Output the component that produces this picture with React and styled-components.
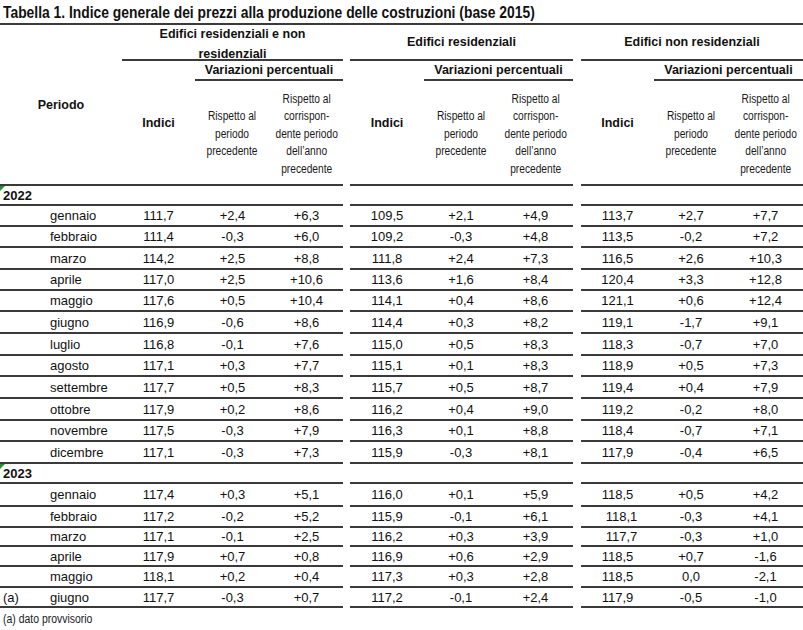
import React from 'react';
import styled, { createGlobalStyle } from 'styled-components';

const GlobalStyle = createGlobalStyle`
  html, body { margin: 0; padding: 0; background: #fff; }
  body { font-family: "Liberation Sans", Arial, sans-serif; color: #111; }
`;

const LINE = '2px solid #3a3a3a';
const COLS = '122px 73px 75px 73px 7px 74px 74px 75px 8px 73px 74px 75px';

const Page = styled.div`
  width: 803px;
`;

/* Arial Narrow is not installed: emulate the condensed face */
const Narrow = styled.span`
  display: inline-block;
  transform: scaleX(${(p) => p.$k || 0.83});
  transform-origin: ${(p) => p.$origin || 'center'};
  white-space: nowrap;
`;

const Title = styled.h1`
  margin: 0;
  height: 25px;
  box-sizing: border-box;
  padding: 2px 0 0 3px;
  border-bottom: ${LINE};
  font-weight: 700;
  font-size: 17px;
  line-height: 21px;
  white-space: nowrap;
  color: #111;
`;

const Head = styled.div`
  display: grid;
  grid-template-columns: ${COLS};
  grid-template-rows: 36px 20px 105px;
`;

const HeadCell = styled.div`
  box-sizing: border-box;
  display: flex;
  align-items: center;
  justify-content: center;
  text-align: center;
  padding-top: ${(p) => p.$pt || 0}px;
  border-bottom: ${LINE};
  font-weight: 700;
  font-size: 12.5px;
  line-height: 20px;
  white-space: nowrap;
  grid-row: span ${(p) => p.$rows || 1};
  grid-column: span ${(p) => p.$cols || 1};
`;

const SubHead = styled.div`
  box-sizing: border-box;
  display: flex;
  align-items: center;
  justify-content: center;
  text-align: center;
  padding-top: 4px;
  border-bottom: ${LINE};
  font-size: 12px;
  line-height: 17.5px;
  white-space: nowrap;
  color: #1a1a1a;
`;

const Gap = styled.div`
  grid-row: span ${(p) => p.$rows || 1};
`;

const Row = styled.div`
  display: grid;
  grid-template-columns: ${COLS};
  height: ${(p) => p.$h}px;
`;

const PeriodCell = styled.div`
  position: relative;
  box-sizing: border-box;
  display: flex;
  align-items: center;
  padding-left: 3px;
  border-bottom: ${LINE};
  font-size: 13px;
  font-weight: ${(p) => (p.$year ? 700 : 400)};
  white-space: nowrap;
`;

const Note = styled.span`
  width: 47px;
  flex: none;
`;

const Flag = styled.span`
  position: absolute;
  left: 0;
  top: 0;
  width: 0;
  height: 0;
  border-top: 5px solid #2f8a3a;
  border-right: 5px solid transparent;
`;

const Cell = styled.div`
  box-sizing: border-box;
  display: flex;
  align-items: center;
  justify-content: center;
  padding-left: ${(p) => (p.$shift ? 8 : 0)}px;
  border-bottom: ${LINE};
  font-size: 13px;
  white-space: nowrap;
`;

const Footnote = styled.div`
  padding: 4px 0 0 3px;
  font-size: 12px;
  line-height: 14px;
  color: #1a1a1a;
`;

const groups = [
  ['Edifici residenziali e non', 'residenziali'],
  ['Edifici residenziali'],
  ['Edifici non residenziali'],
];

const y2022 = [
  ['gennaio', 21, ['111,7', '+2,4', '+6,3'], ['109,5', '+2,1', '+4,9'], ['113,7', '+2,7', '+7,7']],
  ['febbraio', 21, ['111,4', '-0,3', '+6,0'], ['109,2', '-0,3', '+4,8'], ['113,5', '-0,2', '+7,2']],
  ['marzo', 22, ['114,2', '+2,5', '+8,8'], ['111,8', '+2,4', '+7,3'], ['116,5', '+2,6', '+10,3']],
  ['aprile', 21, ['117,0', '+2,5', '+10,6'], ['113,6', '+1,6', '+8,4'], ['120,4', '+3,3', '+12,8']],
  ['maggio', 21, ['117,6', '+0,5', '+10,4'], ['114,1', '+0,4', '+8,6'], ['121,1', '+0,6', '+12,4']],
  ['giugno', 22, ['116,9', '-0,6', '+8,6'], ['114,4', '+0,3', '+8,2'], ['119,1', '-1,7', '+9,1']],
  ['luglio', 22, ['116,8', '-0,1', '+7,6'], ['115,0', '+0,5', '+8,3'], ['118,3', '-0,7', '+7,0']],
  ['agosto', 21, ['117,1', '+0,3', '+7,7'], ['115,1', '+0,1', '+8,3'], ['118,9', '+0,5', '+7,3']],
  ['settembre', 22, ['117,7', '+0,5', '+8,3'], ['115,7', '+0,5', '+8,7'], ['119,4', '+0,4', '+7,9']],
  ['ottobre', 22, ['117,9', '+0,2', '+8,6'], ['116,2', '+0,4', '+9,0'], ['119,2', '-0,2', '+8,0']],
  ['novembre', 21, ['117,5', '-0,3', '+7,9'], ['116,3', '+0,1', '+8,8'], ['118,4', '-0,7', '+7,1']],
  ['dicembre', 22, ['117,1', '-0,3', '+7,3'], ['115,9', '-0,3', '+8,1'], ['117,9', '-0,4', '+6,5']],
];

const y2023 = [
  ['gennaio', 23, ['117,4', '+0,3', '+5,1'], ['116,0', '+0,1', '+5,9'], ['118,5', '+0,5', '+4,2']],
  ['febbraio', 21, ['117,2', '-0,2', '+5,2'], ['115,9', '-0,1', '+6,1'], ['118,1', '-0,3', '+4,1'], true],
  ['marzo', 19, ['117,1', '-0,1', '+2,5'], ['116,2', '+0,3', '+3,9'], ['117,7', '-0,3', '+1,0'], true],
  ['aprile', 20, ['117,9', '+0,7', '+0,8'], ['116,9', '+0,6', '+2,9'], ['118,5', '+0,7', '-1,6']],
  ['maggio', 21, ['118,1', '+0,2', '+0,4'], ['117,3', '+0,3', '+2,8'], ['118,5', '0,0', '-2,1']],
  ['giugno', 20, ['117,7', '-0,3', '+0,7'], ['117,2', '-0,1', '+2,4'], ['117,9', '-0,5', '-1,0'], false, '(a)'],
];

function Header() {
  return (
    <Head>
      <HeadCell $rows={3}>Periodo</HeadCell>
      {groups.map((g, i) => (
        <React.Fragment key={i}>
          <HeadCell $cols={3} $pt={g.length > 1 ? 4 : 0}>
            <div>
              {g.map((l) => (
                <div key={l}>{l}</div>
              ))}
            </div>
          </HeadCell>
          {i < 2 && <Gap $rows={3} />}
        </React.Fragment>
      ))}
      {groups.map((_, i) => (
        <React.Fragment key={i}>
          <HeadCell $rows={2}>Indici</HeadCell>
          <HeadCell $cols={2}>Variazioni percentuali</HeadCell>
        </React.Fragment>
      ))}
      {groups.map((_, i) => (
        <React.Fragment key={i}>
          <SubHead>
            <Narrow $k={0.85}>
              Rispetto al
              <br />
              periodo
              <br />
              precedente
            </Narrow>
          </SubHead>
          <SubHead>
            <Narrow $k={0.85}>
              Rispetto al
              <br />
              corrispon-
              <br />
              dente periodo
              <br />
              dell’anno
              <br />
              precedente
            </Narrow>
          </SubHead>
        </React.Fragment>
      ))}
    </Head>
  );
}

function YearRow({ year }) {
  return (
    <Row $h={20}>
      <PeriodCell $year>
        <Flag />
        {year}
      </PeriodCell>
      <Cell />
      <Cell />
      <Cell />
      <Gap />
      <Cell />
      <Cell />
      <Cell />
      <Gap />
      <Cell />
      <Cell />
      <Cell />
    </Row>
  );
}

function DataRow({ row }) {
  const [month, h, a, b, c, shift, note] = row;
  return (
    <Row $h={h}>
      <PeriodCell>
        <Note>{note}</Note>
        {month}
      </PeriodCell>
      {a.map((v, i) => (
        <Cell key={'a' + i}>{v}</Cell>
      ))}
      <Gap />
      {b.map((v, i) => (
        <Cell key={'b' + i}>{v}</Cell>
      ))}
      <Gap />
      {c.map((v, i) => (
        <Cell key={'c' + i} $shift={shift && i === 0}>
          {v}
        </Cell>
      ))}
    </Row>
  );
}

export default function App() {
  return (
    <Page>
      <GlobalStyle />
      <Title>
        <Narrow $k={0.815} $origin="left">
          Tabella 1. Indice generale dei prezzi alla produzione delle costruzioni (base 2015)
        </Narrow>
      </Title>
      <Header />
      <YearRow year="2022" />
      {y2022.map((r) => (
        <DataRow key={'22' + r[0]} row={r} />
      ))}
      <YearRow year="2023" />
      {y2023.map((r) => (
        <DataRow key={'23' + r[0]} row={r} />
      ))}
      <Footnote>
        <Narrow $k={0.87} $origin="left">
          (a) dato provvisorio
        </Narrow>
      </Footnote>
    </Page>
  );
}
